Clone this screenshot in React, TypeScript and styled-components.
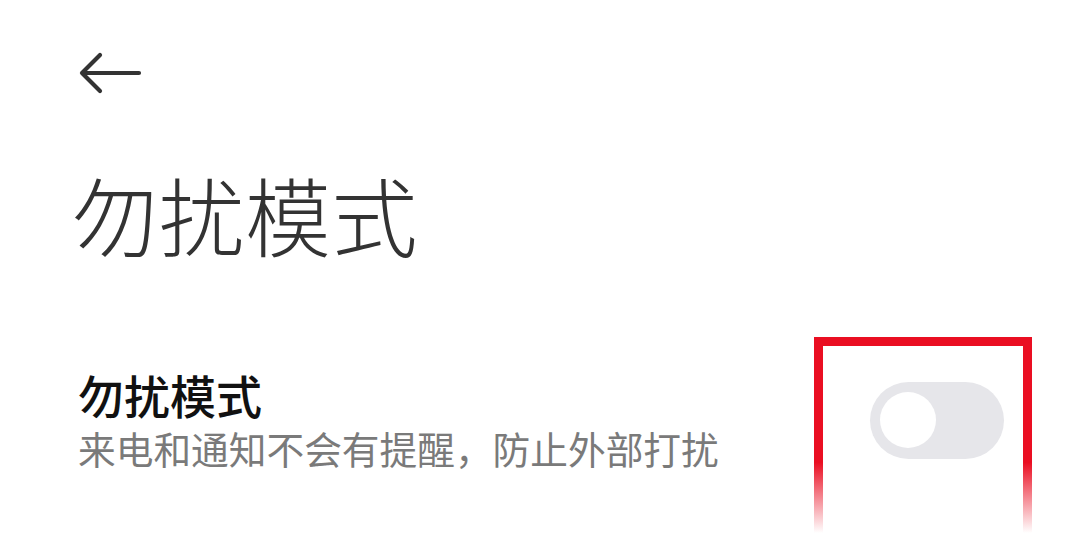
import React from 'react';
import styled, {createGlobalStyle} from 'styled-components';

const GlobalStyle = createGlobalStyle`
  html, body {
    margin: 0;
    padding: 0;
    background: #ffffff;
  }
  body {
    font-family: "Noto Sans CJK SC", "Noto Sans", sans-serif;
  }
`;

const Page = styled.div`
  width: 1080px;
  height: 537px;
  overflow: hidden;
  background: #ffffff;
  display: flex;
  flex-direction: column;
`;

const Header = styled.div`
  display: flex;
  align-items: center;
  height: 60px;
  padding: 43px 0 0 78px;
`;

const BackButton = styled.button`
  display: flex;
  align-items: center;
  justify-content: center;
  padding: 0;
  border: none;
  background: none;
  width: 64px;
  height: 44px;
  cursor: pointer;
`;

const PageTitle = styled.h1`
  margin: 68px 0 0 72px;
  font-size: 86px;
  line-height: 1;
  font-weight: 300;
  color: #333333;
  letter-spacing: 0.5px;
`;

const Row = styled.div`
  display: flex;
  align-items: center;
  justify-content: space-between;
  margin-top: 107px;
  padding: 0 76px 0 78px;
`;

const RowText = styled.div`
  display: flex;
  flex-direction: column;
`;

const RowTitle = styled.div`
  font-size: 46px;
  line-height: 61px;
  font-weight: 500;
  color: #111111;
`;

const RowSubtitle = styled.div`
  font-size: 37.7px;
  line-height: 46px;
  font-weight: 400;
  color: #7a7a7a;
  white-space: nowrap;
`;

const ToggleWrap = styled.div`
  position: relative;
  margin-top: 5px;
`;

const Track = styled.div<{checked?: boolean}>`
  width: 134px;
  height: 77px;
  border-radius: 39px;
  background: ${(p) => (p.checked ? '#3482ff' : '#e6e6ea')};
  display: flex;
  align-items: center;
  justify-content: ${(p) => (p.checked ? 'flex-end' : 'flex-start')};
  padding: 0 10px;
  box-sizing: border-box;
`;

const Knob = styled.div`
  width: 56px;
  height: 56px;
  border-radius: 50%;
  background: #ffffff;
`;

const Highlight = styled.div`
  position: absolute;
  left: -56px;
  right: -28px;
  top: -45px;
  height: 196px;
  border-top: 9px solid #ea0e22;
  box-sizing: border-box;
  pointer-events: none;

  &::before,
  &::after {
    content: '';
    position: absolute;
    top: -9px;
    bottom: 0;
    width: 9px;
    background: linear-gradient(
      to bottom,
      #ea0e22 0%,
      #ea0e22 64%,
      rgba(234, 14, 34, 0.55) 80%,
      rgba(234, 14, 34, 0) 100%
    );
  }
  &::before {
    left: 0;
  }
  &::after {
    right: 0;
  }
`;

const BackArrow = () => (
  <svg width="64" height="44" viewBox="0 0 64 44" fill="none">
    <path
      d="M61 22H4M22 4L4 22L22 40"
      stroke="#333333"
      strokeWidth="4.2"
      strokeLinecap="round"
      strokeLinejoin="round"
    />
  </svg>
);

export default function App() {
  return (
    <Page>
      <GlobalStyle />
      <Header>
        <BackButton aria-label="返回">
          <BackArrow />
        </BackButton>
      </Header>
      <PageTitle>勿扰模式</PageTitle>
      <Row>
        <RowText>
          <RowTitle>勿扰模式</RowTitle>
          <RowSubtitle>来电和通知不会有提醒，防止外部打扰</RowSubtitle>
        </RowText>
        <ToggleWrap>
          <Track>
            <Knob />
          </Track>
          <Highlight />
        </ToggleWrap>
      </Row>
    </Page>
  );
}
